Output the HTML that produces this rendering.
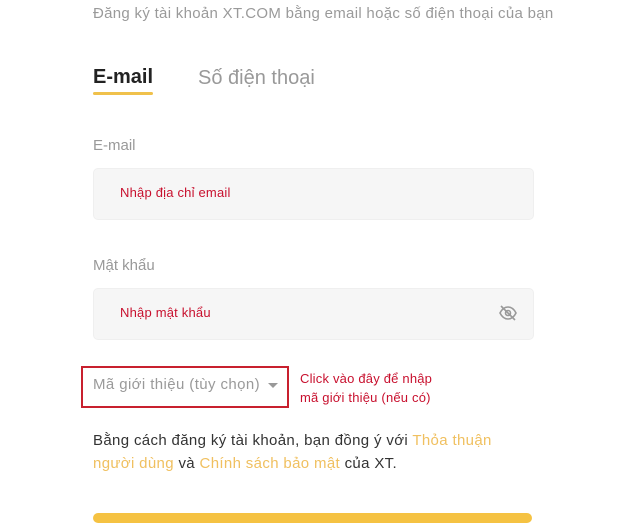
<!DOCTYPE html>
<html><head><meta charset="utf-8"><style>
body{margin:0;width:619px;height:516px;background:#fff;position:relative;overflow:hidden;font-family:"Liberation Sans","DejaVu Sans",sans-serif}
.a{position:absolute;white-space:nowrap}
.box{position:absolute;left:93px;width:439px;height:50px;background:#f6f6f6;border:1px solid #efefef;border-radius:5px}
.red{color:#c8102e;font-size:13px;letter-spacing:0.2px}
</style></head><body>
<div class="a" style="left:93px;top:5px;font-size:15px;color:#9a9a9a;letter-spacing:0.3px">Đăng ký tài khoản XT.COM bằng email hoặc số điện thoại của bạn</div>
<div class="a" style="left:93px;top:66px;font-size:20px;font-weight:bold;color:#222">E-mail</div>
<div class="a" style="left:93px;top:92px;width:60px;height:3px;background:#f0c14b;border-radius:2px"></div>
<div class="a" style="left:198px;top:67px;font-size:20px;color:#999">Số điện thoại</div>
<div class="a" style="left:93px;top:137px;font-size:15px;color:#999">E-mail</div>
<div class="box" style="top:168px"></div>
<div class="a red" style="left:120px;top:185px">Nhập địa chỉ email</div>
<div class="a" style="left:93px;top:257px;font-size:15px;color:#999">Mật khẩu</div>
<div class="box" style="top:288px"></div>
<div class="a red" style="left:120px;top:305px">Nhập mật khẩu</div>
<svg class="a" style="left:498px;top:304px" width="20" height="18" viewBox="0 0 20 18" fill="none" stroke="#999" stroke-width="1.6"><path d="M2 9c2-4 5-6 8-6s6 2 8 6c-2 4-5 6-8 6s-6-2-8-6z"/><circle cx="10" cy="9" r="2.5"/><path d="M3 2l14 14"/></svg>
<div class="a" style="left:81px;top:366px;width:204px;height:38px;border:2px solid #c8202e"></div>
<div class="a" style="left:93px;top:376px;font-size:15px;color:#9a9a9a;letter-spacing:0.4px">Mã giới thiệu (tùy chọn)</div>
<div class="a" style="left:268px;top:383px;width:0;height:0;border-left:5px solid transparent;border-right:5px solid transparent;border-top:5px solid #999"></div>
<div class="a red" style="left:300px;top:371px">Click vào đây để nhập</div>
<div class="a red" style="left:300px;top:390px">mã giới thiệu (nếu có)</div>
<div class="a" style="left:93px;top:429px;font-size:15px;color:#333;line-height:23px;letter-spacing:0.35px">Bằng cách đăng ký tài khoản, bạn đồng ý với <span style="color:#f0c060">Thỏa thuận</span><br><span style="color:#f0c060">người dùng</span> và <span style="color:#f0c060">Chính sách bảo mật</span> của XT.</div>
<div class="a" style="left:93px;top:513px;width:439px;height:10px;background:#f5c242;border-radius:5px"></div>
</body></html>
